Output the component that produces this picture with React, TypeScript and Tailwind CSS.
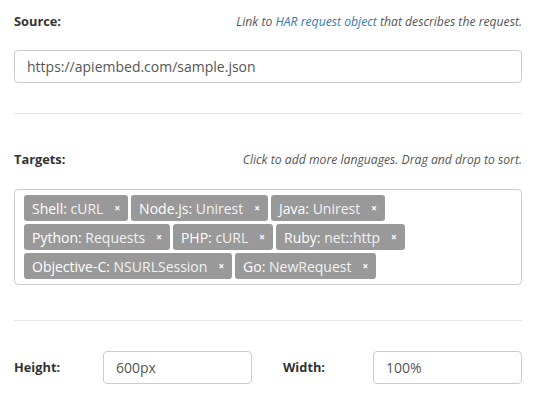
import React from "react";

const tags: [string, string][][] = [
  [["Shell:", "cURL"], ["Node.js:", "Unirest"], ["Java:", "Unirest"]],
  [["Python:", "Requests"], ["PHP:", "cURL"], ["Ruby:", "net::http"]],
  [["Objective-C:", "NSURLSession"], ["Go:", "NewRequest"]],
];

function Tag({ lang, lib }: { lang: string; lib: string }) {
  return (
    <span className="flex h-[26px] items-center rounded-[3px] bg-[#999999] pl-[8px] pr-[8px] text-[14px] text-white">
      <span>
        {lang} <span className="text-[#f2f2f2]">{lib}</span>
      </span>
      <span className="ml-[11px] text-[10px] font-bold leading-none">×</span>
    </span>
  );
}

export default function App() {
  return (
    <div
      className="w-[540px] h-[405px] bg-white pl-[14px] pr-[18px] pt-[13px] overflow-hidden"
      style={{ fontFamily: '"Open Sans", sans-serif' }}
    >
      <div className="flex items-center justify-between h-[18px]">
        <span className="text-[12.8px] font-bold text-[#333]">Source:</span>
        <span className="text-[12.2px] italic text-[#555]">
          Link to <span className="text-[#337ab7]">HAR request object</span> that describes the request.
        </span>
      </div>
      <div className="mt-[19px] flex h-[33px] items-center rounded-[4px] border border-[#cccccc] px-[12px] text-[14px] text-[#555]">
        https://apiembed.com/sample.json
      </div>
      <div className="mt-[30px] h-px bg-[#e5e5e5]" />
      <div className="mt-[37px] flex items-center justify-between h-[18px]">
        <span className="text-[12.8px] font-bold text-[#333]">Targets:</span>
        <span className="text-[12.2px] italic text-[#555]">
          Click to add more languages. Drag and drop to sort.
        </span>
      </div>
      <div className="mt-[20px] h-[96px] rounded-[4px] border border-[#cccccc] pl-[9px] pt-[5px]">
        <div className="flex flex-col gap-[3px]">
          {tags.map((row, i) => (
            <div key={i} className="flex gap-[3px]">
              {row.map(([lang, lib]) => (
                <Tag key={lang} lang={lang} lib={lib} />
              ))}
            </div>
          ))}
        </div>
      </div>
      <div className="mt-[35px] h-px bg-[#e5e5e5]" />
      <div className="mt-[30px] flex items-center">
        <span className="w-[89px] text-[12.8px] font-bold text-[#333]">Height:</span>
        <div className="flex h-[33px] w-[149px] items-center rounded-[4px] border border-[#cccccc] px-[12px] text-[14px] text-[#555]">
          600px
        </div>
        <span className="ml-[31px] w-[90px] text-[12.8px] font-bold text-[#333]">Width:</span>
        <div className="flex h-[33px] w-[149px] items-center rounded-[4px] border border-[#cccccc] px-[12px] text-[14px] text-[#555]">
          100%
        </div>
      </div>
    </div>
  );
}
